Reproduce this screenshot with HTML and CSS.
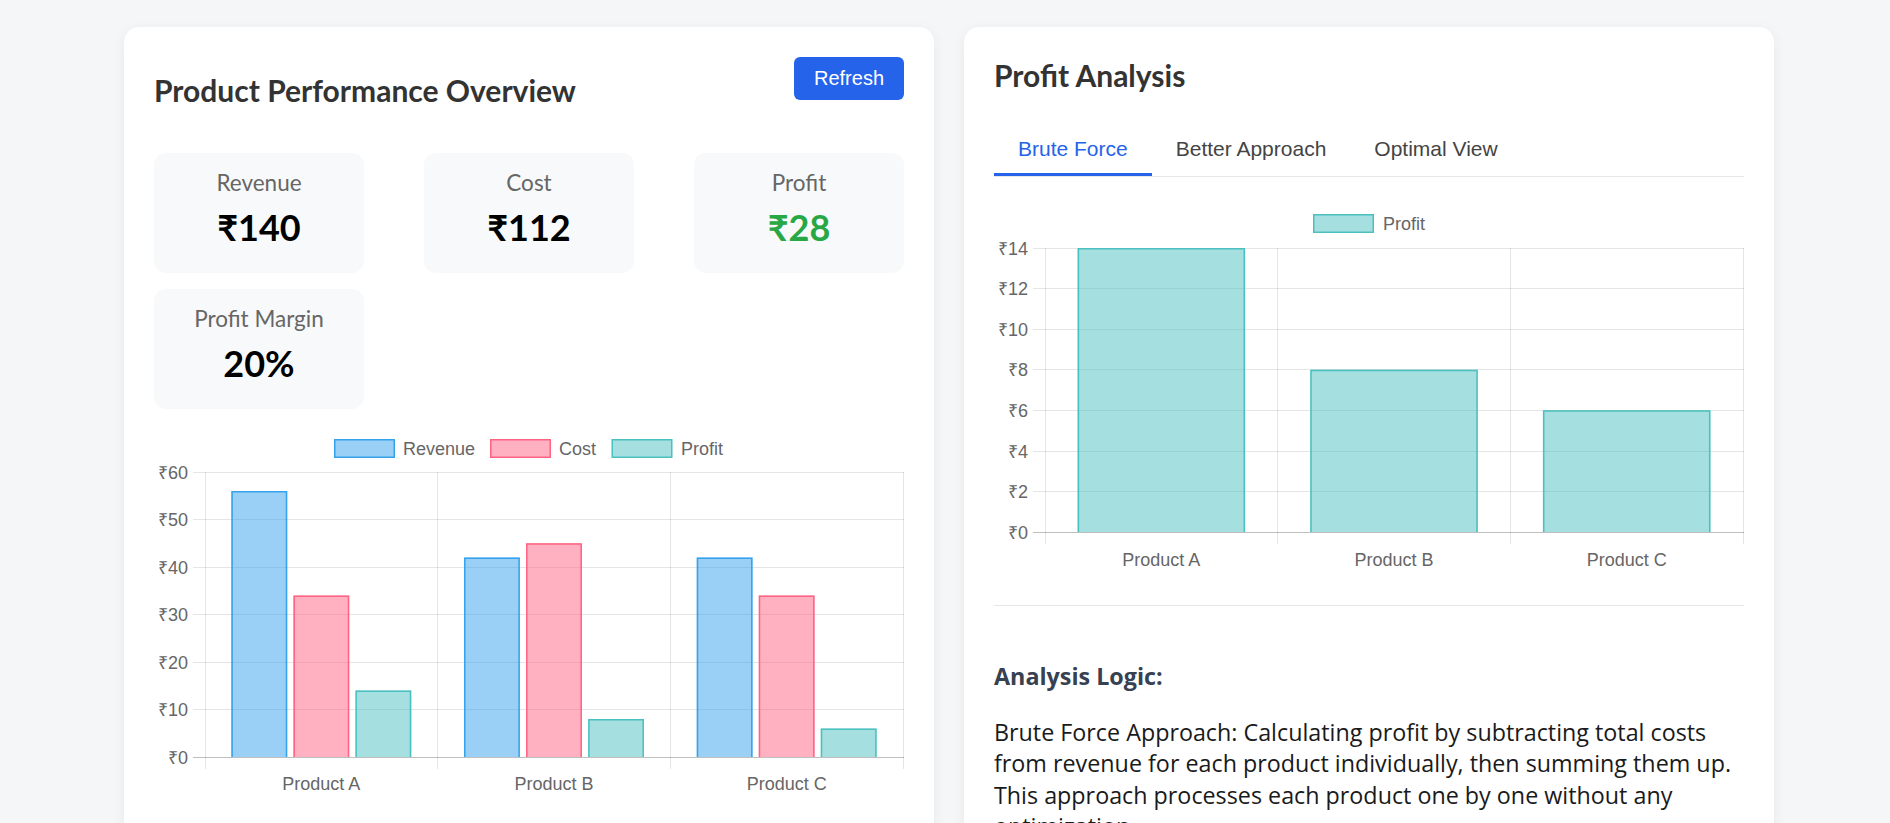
FILE: index.html
```html
<!DOCTYPE html>
<html lang="en">
<head>
<meta charset="utf-8">
<title>Product Performance</title>
<link rel="stylesheet" href="styles.css">
</head>
<body>
<div class="page">
  <section class="card">
    <div class="card-header">
      <h2 class="title title-main">Product Performance Overview</h2>
      <button class="btn">Refresh</button>
    </div>
    <div class="stats">
      <div class="stat"><div class="stat-label">Revenue</div><div class="stat-value">₹140</div></div>
      <div class="stat"><div class="stat-label">Cost</div><div class="stat-value">₹112</div></div>
      <div class="stat"><div class="stat-label">Profit</div><div class="stat-value positive">₹28</div></div>
      <div class="stat"><div class="stat-label">Profit Margin</div><div class="stat-value">20%</div></div>
    </div>
    <div class="chart chart-main">
      <svg class="chart-svg" width="750" height="400" viewBox="0 0 750 400">
        <g>
          <rect x="180.75" y="14.75" width="59.5" height="17.5" fill="rgba(54,162,235,0.5)" stroke="rgb(54,162,235)" stroke-width="1.5"/>
          <text x="249" y="30">Revenue</text>
          <rect x="336.75" y="14.75" width="59.5" height="17.5" fill="rgba(255,99,132,0.5)" stroke="rgb(255,99,132)" stroke-width="1.5"/>
          <text x="405" y="30">Cost</text>
          <rect x="458.25" y="14.75" width="59.5" height="17.5" fill="rgba(75,192,192,0.5)" stroke="rgb(75,192,192)" stroke-width="1.5"/>
          <text x="527" y="30">Profit</text>
        </g>
        <g stroke="rgba(0,0,0,0.1)" stroke-width="1">
          <path d="M39 47.5H750M39 94.5H750M39 142.5H750M39 189.5H750M39 237.5H750M39 284.5H750"/>
          <path d="M51.5 47V344M283.5 47V344M516.5 47V344M749.5 47V344"/>
        </g>
        <path d="M39 332.5H750" stroke="rgba(0,0,0,0.25)" stroke-width="1"/>
        <g class="ytick">
          <text x="34" y="53.5">₹60</text>
          <text x="34" y="101">₹50</text>
          <text x="34" y="148.5">₹40</text>
          <text x="34" y="196">₹30</text>
          <text x="34" y="243.5">₹20</text>
          <text x="34" y="291">₹10</text>
          <text x="34" y="338.5">₹0</text>
        </g>
        <g fill="rgba(54,162,235,0.5)" stroke="none">
          <rect x="77.4" y="66" width="55.8" height="266"/>
          <rect x="310" y="132.5" width="55.8" height="199.5"/>
          <rect x="542.7" y="132.5" width="55.8" height="199.5"/>
        </g>
        <path fill="none" stroke="rgb(54,162,235)" stroke-width="1.5" d="M78.1 332V66.8H132.5V332M310.8 332V133.3H365.1V332M543.5 332V133.3H597.8V332"/>
        <g fill="rgba(255,99,132,0.5)" stroke="none">
          <rect x="139.4" y="170.5" width="55.8" height="161.5"/>
          <rect x="372.1" y="118.3" width="55.8" height="213.7"/>
          <rect x="604.8" y="170.5" width="55.8" height="161.5"/>
        </g>
        <path fill="none" stroke="rgb(255,99,132)" stroke-width="1.5" d="M140.2 332V171.3H194.5V332M372.8 332V119H427.2V332M605.5 332V171.3H659.8V332"/>
        <g fill="rgba(75,192,192,0.5)" stroke="none">
          <rect x="201.5" y="265.5" width="55.8" height="66.5"/>
          <rect x="434.1" y="294" width="55.8" height="38"/>
          <rect x="666.8" y="303.5" width="55.8" height="28.5"/>
        </g>
        <path fill="none" stroke="rgb(75,192,192)" stroke-width="1.5" d="M202.2 332V266.3H256.5V332M434.9 332V294.8H489.2V332M667.5 332V304.3H721.9V332"/>
        <g class="xtick">
          <text x="167.3" y="365">Product A</text>
          <text x="400" y="365">Product B</text>
          <text x="632.7" y="365">Product C</text>
        </g>
      </svg>
    </div>
  </section>

  <section class="card">
    <h2 class="title">Profit Analysis</h2>
    <div class="tabs">
      <button class="tab active">Brute Force</button>
      <button class="tab">Better Approach</button>
      <button class="tab">Optimal View</button>
    </div>
    <div class="chart chart-profit">
      <svg class="chart-svg" width="750" height="380" viewBox="0 0 750 380">
        <rect x="319.75" y="17.75" width="59.5" height="17.5" fill="rgba(75,192,192,0.5)" stroke="rgb(75,192,192)" stroke-width="1.5"/>
        <text x="389" y="33">Profit</text>
        <g stroke="rgba(0,0,0,0.1)" stroke-width="1">
          <path d="M39 51.5H750M39 91.5H750M39 132.5H750M39 172.5H750M39 213.5H750M39 254.5H750M39 294.5H750"/>
          <path d="M51.5 51V347M283.5 51V347M516.5 51V347M749.5 51V347"/>
        </g>
        <path d="M39 335.5H750" stroke="rgba(0,0,0,0.25)" stroke-width="1"/>
        <g class="ytick">
          <text x="34" y="57.5">₹14</text>
          <text x="34" y="97.5">₹12</text>
          <text x="34" y="138.5">₹10</text>
          <text x="34" y="178.5">₹8</text>
          <text x="34" y="219.5">₹6</text>
          <text x="34" y="260.5">₹4</text>
          <text x="34" y="300.5">₹2</text>
          <text x="34" y="341.5">₹0</text>
        </g>
        <g fill="rgba(75,192,192,0.5)" stroke="none">
          <rect x="83.6" y="51" width="167.5" height="284"/>
          <rect x="316.3" y="172.7" width="167.5" height="162.3"/>
          <rect x="548.9" y="213.3" width="167.5" height="121.7"/>
        </g>
        <path fill="none" stroke="rgb(75,192,192)" stroke-width="1.5" d="M84.4 335V51.8H250.3V335M317 335V173.5H483V335M549.7 335V214H715.7V335"/>
        <g class="xtick">
          <text x="167.3" y="368.5">Product A</text>
          <text x="400" y="368.5">Product B</text>
          <text x="632.7" y="368.5">Product C</text>
        </g>
      </svg>
    </div>
    <hr class="divider">
    <div class="logic">
      <h4 class="logic-title">Analysis Logic:</h4>
      <p class="logic-text">Brute Force Approach: Calculating profit by subtracting total costs from revenue for each product individually, then summing them up. This approach processes each product one by one without any optimization.</p>
    </div>
  </section>
</div>
</body>
</html>
```

FILE: styles.css
```css
* { box-sizing: border-box; }

body {
  margin: 0;
  background: #f5f6f8;
  font-family: Lato, "Noto Sans", sans-serif;
  color: #222;
}

.page {
  display: grid;
  grid-template-columns: 1fr 1fr;
  gap: 30px;
  padding: 27px 116px 40px 124px;
  align-items: start;
}

.card {
  background: #fff;
  border-radius: 15px;
  padding: 30px;
  box-shadow: 0 3px 14px rgba(0, 0, 0, 0.06);
  min-height: 900px;
}

.card-header {
  display: flex;
  justify-content: space-between;
  align-items: flex-start;
}

.title {
  margin: 0;
  font-size: 30px;
  line-height: 36px;
  font-weight: 700;
  color: #333;
}

.title-main {
  margin-top: 15px;
}

.btn {
  width: 110px;
  height: 43px;
  border: none;
  border-radius: 6px;
  background: #2563eb;
  color: #fff;
  font-family: "Liberation Sans", Arial, sans-serif;
  font-size: 20px;
  padding: 0;
}

.stats {
  display: flex;
  flex-wrap: wrap;
  justify-content: space-between;
  row-gap: 16px;
  margin-top: 45px;
}

.stat {
  width: 210px;
  height: 120px;
  padding-top: 15px;
  background: #f8f9fa;
  border-radius: 12px;
  text-align: center;
}

.stat-label {
  font-size: 22.5px;
  line-height: 30px;
  color: #666;
}

.stat-value {
  margin-top: 8px;
  font-size: 36px;
  line-height: 43px;
  font-weight: 700;
  color: #000;
}

.stat-value.positive {
  color: #28a745;
}

.chart-main {
  margin-top: 16px;
}

.chart-svg {
  display: block;
}

.chart-svg text {
  font-family: "Liberation Sans", Arial, sans-serif;
  font-size: 18px;
  fill: #666;
}

.ytick text { text-anchor: end; }
.xtick text { text-anchor: middle; }

.tabs {
  display: flex;
  margin-top: 32px;
  border-bottom: 1px solid #e5e7eb;
}

.tab {
  background: none;
  border: none;
  border-bottom: 3px solid transparent;
  padding: 12px 24px;
  font-family: "Liberation Sans", Arial, sans-serif;
  font-size: 21px;
  line-height: 24px;
  color: #444;
}

.tab.active {
  color: #2563eb;
  border-bottom-color: #2563eb;
}

.chart-profit {
  margin-top: 20px;
}

.divider {
  border: 0;
  border-top: 1px solid #e5e7eb;
  margin: 28px 0 0;
}

.logic {
  font-family: "Open Sans", Lato, sans-serif;
}

.logic-title {
  margin: 55px 0 0;
  font-size: 23.3px;
  line-height: 31.6px;
  font-weight: 700;
  color: #374151;
}

.logic-text {
  margin: 24px 0 0;
  font-size: 23.3px;
  line-height: 31.6px;
  color: #1a1a1a;
}
```
